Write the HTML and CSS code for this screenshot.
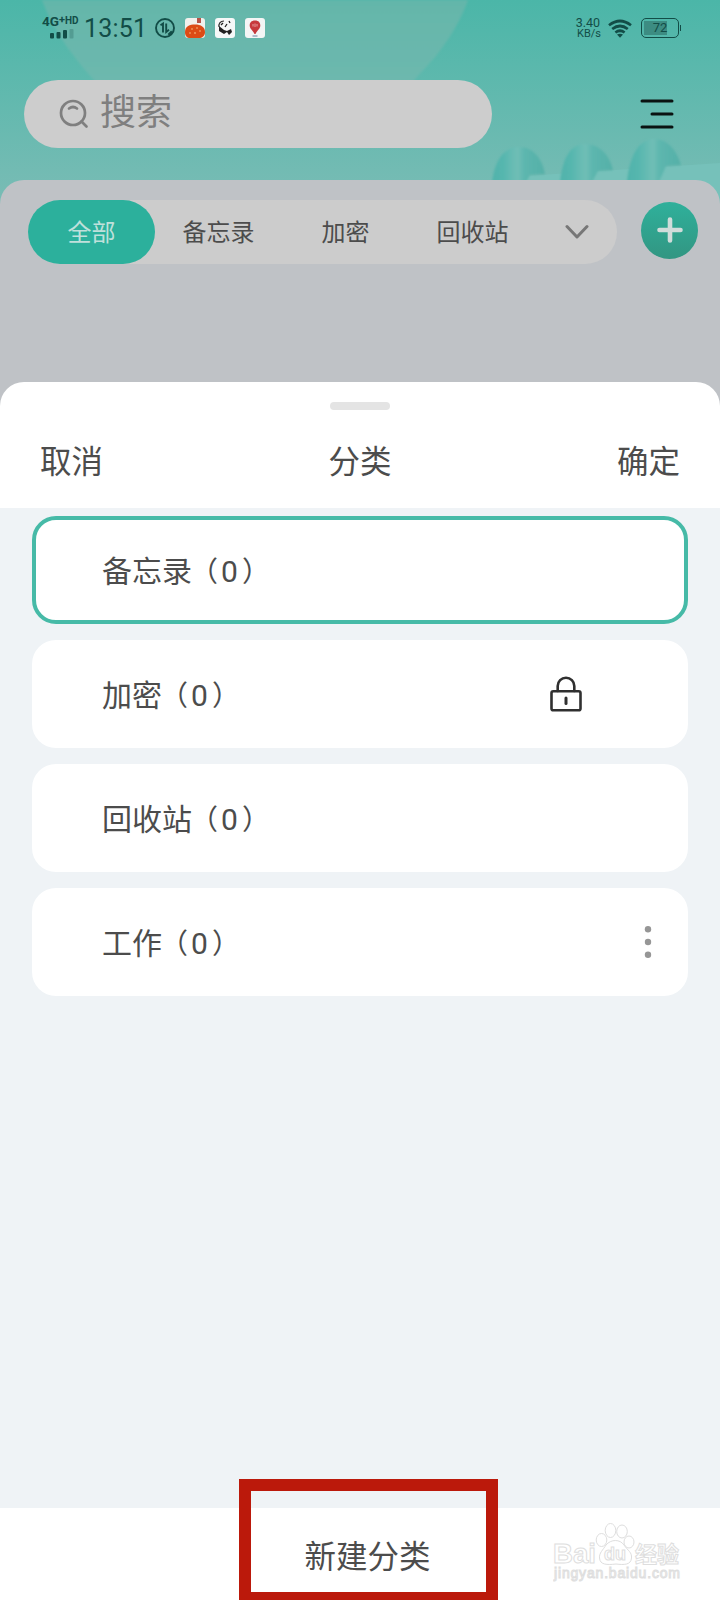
FILE: index.html
```html
<!DOCTYPE html>
<html lang="zh-CN">
<head>
<meta charset="utf-8">
<title>分类</title>
<link rel="stylesheet" href="styles.css">
</head>
<body>
<div class="app">
  <header class="hero">
    <svg class="hero-art" width="720" height="204" viewBox="0 0 720 204">
      <defs>
        <linearGradient id="sky" x1="0" y1="0" x2="0" y2="1"><stop offset="0" stop-color="#4bb6a8"/><stop offset="1" stop-color="#7abcb5"/></linearGradient>
        <linearGradient id="disc" x1="0" y1="0" x2="0" y2="1"><stop offset="0" stop-color="#64b6aa"/><stop offset="1" stop-color="#74bab1"/></linearGradient>
        <linearGradient id="ring" x1="0" y1="0" x2="1" y2="0"><stop offset="0" stop-color="#50b3ab"/><stop offset=".2" stop-color="#55b6ae"/><stop offset=".48" stop-color="#70beb6"/><stop offset=".62" stop-color="#5cb6ae"/><stop offset="1" stop-color="#55b0a8"/></linearGradient>
        <filter id="soft"><feGaussianBlur stdDeviation="1"/></filter>
      </defs>
      <rect width="720" height="204" fill="url(#sky)"/>
      <path d="M42 0C53 30 72 56 94 80L140 140H360L436 56C450 38 461 20 468 0Z" fill="url(#disc)" filter="url(#soft)"/>
      <path d="M525 176L720 163V204H492Z" fill="#76c1ba"/>
      <g fill="url(#ring)" filter="url(#soft)">
        <path d="M492 184C494 162 503 147 519 147C533 147 542 158 545 174L530 175L525 184Z"/>
        <path d="M560 184C562 159 570 144 585 144C600 144 610 156 613 170L598 171L591 184Z"/>
        <path d="M627 184C629 156 639 139 654 139C668 139 677 151 681 165L666 166L658 184Z"/>
      </g>
    </svg>
    <div class="status">
      <div class="net">
        <span class="net-label">4G<sup>+</sup><small>HD</small></span>
        <svg width="24" height="11" viewBox="0 0 24 11" fill="#124d47"><rect x="0" y="5" width="4" height="5.5" rx="1"/><rect x="6.500" y="4" width="4" height="6.500" rx="1"/><rect x="13" y="2" width="4" height="8.500" rx="1"/><rect x="19.500" y="1" width="4" height="9.500" rx="1" opacity=".25"/></svg>
      </div>
      <span class="clock">13:51</span>
      <svg class="data" width="20" height="20" viewBox="0 0 20 20" fill="none" stroke="#124d47" stroke-width="1.900"><circle cx="10" cy="10" r="9"/><path d="M5.500 7.200L8 5.500V14.500M11.200 5.500V14L14 11.800"/><path d="M13.500 17L17 13.500" stroke-width="2.500"/></svg>
      <svg class="mini" width="20" height="20" viewBox="0 0 20 20"><rect width="20" height="20" rx="3" fill="#f2f0ec"/><rect x="12" y="0" width="4" height="5" fill="#b65348"/><path d="M0 14C0 8 5 6.500 10 6.500C16 6.500 20 9 20 14C20 18 17 20 14 20H5C2 20 0 18 0 14Z" fill="#dc4b16"/><g fill="#ffd49a"><circle cx="7" cy="11" r=".7"/><circle cx="12" cy="10" r=".7"/><circle cx="15" cy="13" r=".7"/><circle cx="5" cy="15" r=".7"/><circle cx="10" cy="15" r=".8"/></g></svg>
      <svg class="mini" width="20" height="20" viewBox="0 0 20 20"><rect width="20" height="20" rx="3" fill="#f6f8f8"/><path d="M9 3C5 3 3.500 6 4 9" stroke="#333" stroke-width="1.200" fill="none"/><path d="M4 8L9 12L12 13L16 11L17 14L14 17L12 14L9 16L4 13Z" fill="#222"/><path d="M14 3L15 5M8 5L6 7M12 6L10 9" stroke="#222" stroke-width="1.300"/></svg>
      <svg class="mini" width="20" height="20" viewBox="0 0 20 20"><rect width="20" height="20" rx="3" fill="#f4f5f5"/><path d="M10 2.500C6 2.500 4.500 5 4.700 8C5 11 8 12.500 9.500 16H10.500C12 12.500 15 11 15.300 8C15.500 5 14 2.500 10 2.500Z" fill="#c7393c"/><path d="M8 6V8.500M10 5.500V9M12 6V8.500" stroke="#f5c9c9" stroke-width=".7"/><path d="M7.500 18H12.500" stroke="#9aa6bb" stroke-width="1.500"/></svg>
      <div class="speed"><span>3.40</span><small>KB/s</small></div>
      <svg class="wifi" width="24" height="19" viewBox="0 0 24 19" fill="none" stroke="#124d47" stroke-width="2.700"><path d="M1 6.200Q12-2.200 23 6.200M4.200 10Q12 4 19.800 10M7.400 13.500Q12 10 16.600 13.500"/><path d="M9 15.600Q12 13.800 15 15.600L12 18.800Z" fill="#124d47" stroke="none"/></svg>
      <div class="battery"><span>72</span></div>
    </div>
    <div class="top-row">
      <div class="search">
        <svg width="30" height="30" viewBox="0 0 30 30" fill="none" stroke="#7f7f7f" stroke-width="2.700" stroke-linecap="round"><circle cx="14" cy="14" r="12"/><path d="M10 9.500Q14 6.500 18 9.500M22.500 22.500L27.500 27.500"/></svg>
        <span>搜索</span>
      </div>
      <svg class="menu" width="34" height="32" viewBox="0 0 34 32" stroke="#0a1211" stroke-width="3" stroke-linecap="round"><path d="M2 3H32M12 16H32M2 29H32"/></svg>
    </div>
  </header>
  <section class="panel">
    <nav class="tabs">
      <span class="tab active">全部</span><span class="tab">备忘录</span><span class="tab">加密</span><span class="tab">回收站</span>
      <span class="more"><svg width="24" height="16" viewBox="0 0 24 16" fill="none" stroke="#777" stroke-width="3" stroke-linecap="round" stroke-linejoin="round"><path d="M2 2.500L12 13L22 2.500"/></svg></span>
    </nav>
    <div class="add"><svg width="26" height="26" viewBox="0 0 26 26" stroke="#d0dcda" stroke-width="4.600" stroke-linecap="round"><path d="M13 2.500V23.500M2.500 13H23.500"/></svg></div>
  </section>
  <section class="sheet">
    <div class="handle"></div>
    <div class="sheet-head"><span>取消</span><span>分类</span><span>确定</span></div>
    <div class="list">
      <div class="card selected"><span class="name">备忘录<span class="open">（</span>0<span class="close">）</span></span></div>
      <div class="card"><span class="name">加密<span class="open">（</span>0<span class="close">）</span></span>
        <svg class="lock" width="32" height="36" viewBox="0 0 32 36" fill="none" stroke="#303030" stroke-width="2.600" stroke-linecap="round"><rect x="1.500" y="15.300" width="29" height="19" rx="1.800"/><path d="M7.700 15V10A8.300 8.300 0 0 1 24.300 10V15"/><path d="M16 22V27.500" stroke-width="3"/></svg>
      </div>
      <div class="card"><span class="name">回收站<span class="open">（</span>0<span class="close">）</span></span></div>
      <div class="card"><span class="name">工作<span class="open">（</span>0<span class="close">）</span></span>
        <svg class="dots" width="8" height="34" viewBox="0 0 8 34" fill="#969696"><circle cx="4" cy="4.200" r="3.200"/><circle cx="4" cy="17" r="3.200"/><circle cx="4" cy="29.800" r="3.200"/></svg>
      </div>
    </div>
    <footer class="bottom">
      <span class="create">新建分类</span>
      <div class="marker"></div>
      <svg class="watermark" width="134" height="72" viewBox="0 0 134 72" fill="#fff" stroke="#dedede" stroke-width="1">
        <ellipse cx="48.500" cy="23" rx="5.300" ry="6.500"/><ellipse cx="57.500" cy="13.500" rx="5.300" ry="7"/><ellipse cx="69" cy="14.500" rx="5.300" ry="6.500"/><ellipse cx="76" cy="25" rx="5" ry="6"/>
        <path d="M53 28C58 22 67 22 71 28C75 34 79 35 78.500 41C78 48 71 48 63 47C54 48 47 48 46.500 41C46 36 50 33 53 28Z"/>
        <text class="wm-brand" x="0" y="46" textLength="43" lengthAdjust="spacingAndGlyphs">Bai</text>
        <text class="wm-du" x="51" y="43" textLength="22">du</text>
        <text class="wm-cn" x="82" y="45">经验</text>
        <text class="wm-url" x="1" y="61" textLength="126">jingyan.baidu.com</text>
      </svg>
    </footer>
  </section>
</div>
</body>
</html>
```
FILE: styles.css
```css
* { box-sizing: border-box; }
body { margin: 0; font-family: Roboto, "Noto Sans CJK SC", sans-serif; color: #4c4c4c; }
svg { display: block; flex: none; }
.app { width: 720px; height: 1600px; overflow: hidden; display: flex; flex-direction: column; background: #bec2c6; }

.hero { position: relative; height: 180px; flex: none; }
.hero-art { position: absolute; top: 0; left: 0; }
.status { position: relative; height: 56px; padding: 0 41px 0 42px; display: flex; align-items: center; color: #124d47; }
.net { width: 42px; height: 24px; display: flex; flex-direction: column; }
.net svg { margin-left: 8px; }
.net-label { height: 12px; font-size: 13.500px; line-height: 11px; font-weight: 700; white-space: nowrap; }
.net-label sup { font-size: 11px; line-height: 0; vertical-align: 3px; }
.net-label small { font-size: 10px; line-height: 0; vertical-align: 2px; }
.clock { width: 71px; padding-top: 2px; font-size: 25px; line-height: 30px; letter-spacing: .2px; }
.mini { margin-left: 10px; }
.speed { width: 30px; margin-left: auto; text-align: right; font-size: 12.500px; line-height: 12px; display: flex; flex-direction: column; }
.speed span { height: 11px; margin-right: 1px; }
.speed small { font-size: 11px; line-height: 11px; }
.wifi { margin: 0 9px 0 7px; }
.battery { position: relative; width: 38px; height: 20px; border: 1.500px solid #124d47; border-radius: 5px; font-size: 13px; line-height: 18px; text-align: center; background: linear-gradient(#3c8c82, #3c8c82) 2px 2px / 23px 14px no-repeat; }
.battery::after { content: ""; position: absolute; right: -3px; top: 6px; width: 1px; height: 6px; background: #124d47; }

.top-row { position: relative; padding: 24px 46px 0 24px; display: flex; align-items: center; justify-content: space-between; }
.search { width: 468px; height: 68px; padding-left: 35px; display: flex; align-items: center; gap: 11px; border-radius: 34px; background: #cdcdcd; color: #7f7f7f; font-size: 36px; line-height: 60px; }
.search span { margin-top: -2px; }

.panel { height: 226px; position: relative; flex: none; padding: 20px 22px 0 28px; display: flex; align-items: flex-start; justify-content: space-between; background: #bfc2c6; border-radius: 24px 24px 0 0; }
.tabs { width: 589px; height: 64px; display: flex; border-radius: 32px; background: #cccccc; font-size: 24px; line-height: 67px; }
.tab { width: 127px; height: 64px; text-align: center; }
.tab.active { border-radius: 32px; background: #2cb09c; color: #bfe0db; }
.more { flex: 1; display: flex; align-items: center; justify-content: center; }
.add { width: 57px; height: 57px; margin-top: 1.500px; border-radius: 50%; display: flex; align-items: center; justify-content: center; background: linear-gradient(#2fb09b, #329682); }

.sheet { position: relative; height: 1218px; margin-top: -24px; flex: none; display: flex; flex-direction: column; background: #fff; border-radius: 24px 24px 0 0; }
.handle { width: 60px; height: 8px; margin: 20px auto 0; border-radius: 4px; background: #e4e4e4; }
.sheet-head { height: 98px; padding: 0 40px; display: flex; justify-content: space-between; font-size: 31.500px; line-height: 105px; }
.list { flex: 1; padding: 8px 32px; display: flex; flex-direction: column; gap: 16px; background: #eff3f6; }
.card { height: 108px; padding: 0 36px 0 70px; display: flex; align-items: center; border-radius: 24px; background: #fff; font-size: 30px; }
.card.selected { padding-left: 66px; border: 4px solid #46baa7; }
.name { margin-top: -3px; }
.open { margin: 0 3px 0 -2px; font-size: 28px; }
.close { margin-left: 4px; font-size: 28px; }
.lock { margin-left: auto; margin-right: 70px; }
.dots { margin-left: auto; }
.bottom { position: relative; height: 92px; padding-left: 15px; display: flex; justify-content: center; background: #fff; font-size: 31.500px; line-height: 99px; }
.marker { position: absolute; left: 239px; top: -29px; width: 259px; height: 125px; border: 12px solid #bb190b; }
.watermark { position: absolute; left: 553px; top: 9px; }
.wm-brand { font: 700 27px "Liberation Sans", sans-serif; }
.wm-du { font: 700 18px "Liberation Sans", sans-serif; }
.wm-cn { font: 700 22px "Noto Sans CJK SC", sans-serif; }
.wm-url { font: 14px "Liberation Sans", sans-serif; }
```
